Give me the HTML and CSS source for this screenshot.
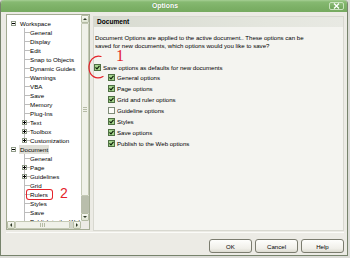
FILE: index.html
```html
<!DOCTYPE html>
<html>
<head>
<meta charset="utf-8">
<link rel="stylesheet" href="styles.css">
</head>
<body>
<div class="window">
  <div class="titlebar">
    <span class="title">Options</span>
    <span class="close"><svg width="7" height="6" viewBox="0 0 7 6"><path d="M1 0.5l5 5M6 0.5l-5 5" stroke="#fff" stroke-width="1.4"/></svg></span>
  </div>
  <div class="body">
    <div class="main">
      <div class="tree-panel">
        <div class="tree-row">
          <div class="tree">
            <div class="node root"><svg class="exp" width="5" height="5" viewBox="0 0 5 5"><rect x=".5" y=".5" width="4" height="4" fill="#fff" stroke="#8f9a87"/><path d="M1 2.5h3" stroke="#000"/></svg><span>Workspace</span></div>
            <div class="node leaf">General</div>
            <div class="node leaf">Display</div>
            <div class="node leaf">Edit</div>
            <div class="node leaf">Snap to Objects</div>
            <div class="node leaf">Dynamic Guides</div>
            <div class="node leaf">Warnings</div>
            <div class="node leaf">VBA</div>
            <div class="node leaf">Save</div>
            <div class="node leaf">Memory</div>
            <div class="node leaf">Plug-Ins</div>
            <div class="node branch"><svg class="exp" width="5" height="5" viewBox="0 0 5 5"><rect x=".5" y=".5" width="4" height="4" fill="#fff" stroke="#8f9a87"/><path d="M1 2.5h3M2.5 1v3" stroke="#000"/></svg><span>Text</span></div>
            <div class="node branch"><svg class="exp" width="5" height="5" viewBox="0 0 5 5"><rect x=".5" y=".5" width="4" height="4" fill="#fff" stroke="#8f9a87"/><path d="M1 2.5h3M2.5 1v3" stroke="#000"/></svg><span>Toolbox</span></div>
            <div class="node branch last"><svg class="exp" width="5" height="5" viewBox="0 0 5 5"><rect x=".5" y=".5" width="4" height="4" fill="#fff" stroke="#8f9a87"/><path d="M1 2.5h3M2.5 1v3" stroke="#000"/></svg><span>Customization</span></div>
            <div class="node root"><svg class="exp" width="5" height="5" viewBox="0 0 5 5"><rect x=".5" y=".5" width="4" height="4" fill="#fff" stroke="#8f9a87"/><path d="M1 2.5h3" stroke="#000"/></svg><span class="selected">Document</span></div>
            <div class="node leaf">General</div>
            <div class="node branch"><svg class="exp" width="5" height="5" viewBox="0 0 5 5"><rect x=".5" y=".5" width="4" height="4" fill="#fff" stroke="#8f9a87"/><path d="M1 2.5h3M2.5 1v3" stroke="#000"/></svg><span>Page</span></div>
            <div class="node branch"><svg class="exp" width="5" height="5" viewBox="0 0 5 5"><rect x=".5" y=".5" width="4" height="4" fill="#fff" stroke="#8f9a87"/><path d="M1 2.5h3M2.5 1v3" stroke="#000"/></svg><span>Guidelines</span></div>
            <div class="node leaf">Grid</div>
            <div class="node leaf"><span class="marked">Rulers</span><span class="note-two">2</span></div>
            <div class="node leaf">Styles</div>
            <div class="node leaf">Save</div>
            <div class="node leaf last">Publish to the Web</div>
          </div>
          <div class="vscroll">
            <div class="sb-btn"><svg width="6" height="6" viewBox="0 0 6 6"><path d="M1 4h4L3 2z" fill="#2f3a28"/></svg></div>
            <div class="thumb v"><span class="grip v"></span></div>
            <div class="track v"></div>
            <div class="sb-btn"><svg width="6" height="6" viewBox="0 0 6 6"><path d="M1 2h4L3 4z" fill="#2f3a28"/></svg></div>
          </div>
        </div>
        <div class="hscroll">
          <div class="sb-btn"><svg width="6" height="6" viewBox="0 0 6 6"><path d="M4 1v4L2 3z" fill="#2f3a28"/></svg></div>
          <div class="thumb h"><span class="grip h"></span></div>
          <div class="track h"></div>
          <div class="sb-btn"><svg width="6" height="6" viewBox="0 0 6 6"><path d="M2 1v4L4 3z" fill="#2f3a28"/></svg></div>
          <div class="corner"></div>
        </div>
      </div>
      <div class="content">
        <div class="content-header">Document</div>
        <p class="desc">Document Options are applied to the active document.. These options can be<br>saved for new documents, which options would you like to save?</p>
        <div class="opt main-opt">
          <svg class="note-circle" width="20" height="28" viewBox="0 0 20 28"><path d="M14 2.5C7 0.5 1.5 7 2 14.5C2.5 21.5 9 26.5 16 22.5" fill="none" stroke="#e4222a" stroke-width="1.2" stroke-linecap="round"/></svg>
          <span class="note-one">1</span>
          <svg class="cb" width="7" height="7" viewBox="0 0 7 7"><rect x=".5" y=".5" width="6" height="6" fill="#a4d48c" stroke="#4f6f43"/><path d="M1.5 3.3L3 4.8L5.5 1.8" fill="none" stroke="#10200a" stroke-width="1.2"/></svg>
          <span>Save options as defaults for new documents</span>
        </div>
        <div class="opt sub"><svg class="cb" width="7" height="7" viewBox="0 0 7 7"><rect x=".5" y=".5" width="6" height="6" fill="#a4d48c" stroke="#4f6f43"/><path d="M1.5 3.3L3 4.8L5.5 1.8" fill="none" stroke="#10200a" stroke-width="1.2"/></svg><span>General options</span></div>
        <div class="opt sub"><svg class="cb" width="7" height="7" viewBox="0 0 7 7"><rect x=".5" y=".5" width="6" height="6" fill="#a4d48c" stroke="#4f6f43"/><path d="M1.5 3.3L3 4.8L5.5 1.8" fill="none" stroke="#10200a" stroke-width="1.2"/></svg><span>Page options</span></div>
        <div class="opt sub"><svg class="cb" width="7" height="7" viewBox="0 0 7 7"><rect x=".5" y=".5" width="6" height="6" fill="#a4d48c" stroke="#4f6f43"/><path d="M1.5 3.3L3 4.8L5.5 1.8" fill="none" stroke="#10200a" stroke-width="1.2"/></svg><span>Grid and ruler options</span></div>
        <div class="opt sub"><svg class="cb" width="7" height="7" viewBox="0 0 7 7"><rect x=".5" y=".5" width="6" height="6" fill="#fbfbf8" stroke="#7f8b78"/></svg><span>Guideline options</span></div>
        <div class="opt sub"><svg class="cb" width="7" height="7" viewBox="0 0 7 7"><rect x=".5" y=".5" width="6" height="6" fill="#a4d48c" stroke="#4f6f43"/><path d="M1.5 3.3L3 4.8L5.5 1.8" fill="none" stroke="#10200a" stroke-width="1.2"/></svg><span>Styles</span></div>
        <div class="opt sub"><svg class="cb" width="7" height="7" viewBox="0 0 7 7"><rect x=".5" y=".5" width="6" height="6" fill="#a4d48c" stroke="#4f6f43"/><path d="M1.5 3.3L3 4.8L5.5 1.8" fill="none" stroke="#10200a" stroke-width="1.2"/></svg><span>Save options</span></div>
        <div class="opt sub"><svg class="cb" width="7" height="7" viewBox="0 0 7 7"><rect x=".5" y=".5" width="6" height="6" fill="#a4d48c" stroke="#4f6f43"/><path d="M1.5 3.3L3 4.8L5.5 1.8" fill="none" stroke="#10200a" stroke-width="1.2"/></svg><span>Publish to the Web options</span></div>
      </div>
    </div>
    <div class="separator"></div>
    <div class="buttons">
      <button class="btn">OK</button>
      <button class="btn">Cancel</button>
      <button class="btn">Help</button>
    </div>
  </div>
</div>
</body>
</html>
```
FILE: styles.css
```css
html, body {
  margin: 0;
  padding: 0;
}
body {
  width: 350px;
  height: 258px;
  overflow: hidden;
  background: #dcdcd8;
  font-family: "Liberation Sans", Arial, sans-serif;
  color: #000;
}
.window {
  width: 346px;
  height: 255px;
  border: 1px solid #77836c;
  border-top: none;
  border-radius: 4px 4px 0 0;
  background: #ecebe5;
  display: flex;
  flex-direction: column;
  overflow: hidden;
}
.titlebar {
  height: 12px;
  flex: none;
  display: flex;
  align-items: center;
  background: linear-gradient(#a6cf94 0, #86b971 2px, #7cb066 60%, #76aa60 100%);
}
.title {
  flex: 1;
  text-align: center;
  color: #fff;
  font-weight: bold;
  font-size: 6.9px;
  line-height: 12px;
  text-shadow: 0 0 1px #4f7f3c;
}
.close {
  width: 13px;
  height: 6px;
  margin-right: 3px;
  border: 1px solid #c9e2bd;
  border-radius: 2px;
  background: linear-gradient(#8dbd78, #6ea35a);
  display: flex;
  align-items: center;
  justify-content: center;
}
.body {
  flex: 1;
  padding: 2px 3px 2px 5px;
  display: flex;
  flex-direction: column;
}
.main {
  display: flex;
  gap: 3px;
  height: 217px;
  align-items: flex-start;
}
.tree-panel {
  width: 82px;
  height: 214px;
  border: 1px solid #a3ab93;
  background: #fff;
  display: flex;
  flex-direction: column;
  position: relative;
}
.tree-row {
  display: flex;
  height: 206px;
}
.tree {
  flex: 1;
  overflow: hidden;
  padding-top: 4px;
}
.node {
  height: 9px;
  display: flex;
  align-items: center;
  font-size: 6.2px;
  line-height: 9px;
  white-space: nowrap;
}
.node.root {
  padding-left: 4px;
  gap: 4px;
}
.node.leaf,
.node.branch {
  background-image: linear-gradient(#bcbcbc, #bcbcbc), linear-gradient(#bcbcbc, #bcbcbc);
  background-size: 1px 100%, 6px 1px;
  background-position: 17px 0, 17px 4px;
  background-repeat: no-repeat;
}
.node.leaf.last,
.node.branch.last {
  background-size: 1px 5px, 6px 1px;
}
.node.leaf {
  padding-left: 23px;
}
.node.branch {
  padding-left: 15px;
  gap: 3px;
}
.exp {
  flex: none;
  display: block;
}
.selected {
  background: #dfdfd7;
  padding: 0 1px;
  margin-left: -1px;
}
.marked {
  padding: 0 4px 0 3px;
  margin-left: -3px;
  height: 9px;
  border-radius: 2px;
  box-shadow: 0 0 0 1px #e4222a;
}
.note-two {
  color: #e4222a;
  font-size: 14px;
  line-height: 9px;
  margin-left: 8px;
  margin-bottom: 2px;
}
.vscroll {
  width: 8px;
  display: flex;
  flex-direction: column;
  background: #f3f3ee;
}
.sb-btn {
  width: 6px;
  height: 6px;
  flex: none;
  border: 1px solid #b5bca4;
  border-radius: 1px;
  background: linear-gradient(#f7f8f2, #dfe4d2);
  display: flex;
  align-items: center;
  justify-content: center;
}
.sb-btn svg {
  display: block;
}
.thumb {
  flex: 1;
  border: 1px solid #c4c9b5;
  border-radius: 1px;
  background: #f0f1e9;
  display: flex;
  align-items: center;
  justify-content: center;
}
.grip.v {
  width: 4px;
  height: 5px;
  background: repeating-linear-gradient(#b5bba5 0 1px, transparent 1px 2px);
}
.grip.h {
  width: 5px;
  height: 4px;
  background: repeating-linear-gradient(90deg, #b5bba5 0 1px, transparent 1px 2px);
}
.track.v {
  height: 17px;
  flex: none;
  background: #b9beac;
}
.track.h {
  width: 3px;
  flex: none;
  background: #d3d6ca;
}
.hscroll {
  height: 8px;
  display: flex;
  background: #f3f3ee;
}
.corner {
  width: 8px;
  flex: none;
  background: #ecebe5;
}
.content {
  width: 249px;
  height: 213px;
  margin-top: 2px;
  border: 1px solid #d8d8d0;
  background: #f4f4f0;
  font-size: 6.1px;
}
.content-header {
  height: 10px;
  line-height: 10px;
  padding-left: 3px;
  font-weight: bold;
  font-size: 6.6px;
  background: linear-gradient(90deg, #d7dad0, #e4e6de 70%, #e8e9e3);
}
.desc {
  margin: 7px 0 0 1px;
  line-height: 8px;
}
.opt {
  display: flex;
  align-items: center;
  white-space: nowrap;
}
.cb {
  flex: none;
  display: block;
}
.main-opt {
  height: 10px;
  margin-top: 12px;
  gap: 2px;
  position: relative;
}
.opt.sub {
  height: 11px;
  padding-left: 14px;
  gap: 2px;
}
.note-circle {
  position: absolute;
  left: -7px;
  top: -8px;
}
.note-one {
  position: absolute;
  left: 22px;
  top: -14px;
  color: #e4222a;
  font-family: "Liberation Serif", serif;
  font-size: 16px;
  line-height: 16px;
}
.separator {
  height: 1px;
  margin-top: 1px;
  background: #fbfbf8;
}
.buttons {
  display: flex;
  justify-content: flex-end;
  gap: 3px;
  margin-top: 6px;
}
.btn {
  width: 43px;
  height: 14px;
  padding: 0;
  border: 1px solid #7b7c6f;
  border-radius: 3px;
  background: linear-gradient(#fefefc, #f0efe9 70%, #dcdbd1);
  font-family: "Liberation Sans", Arial, sans-serif;
  font-size: 6.1px;
  color: #000;
}
```
